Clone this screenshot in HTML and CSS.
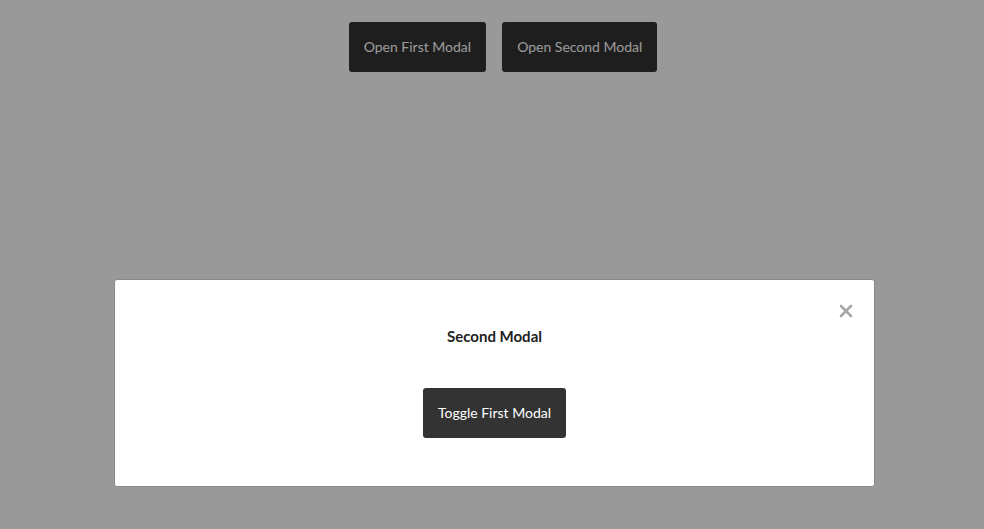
FILE: index.html
```html
<!DOCTYPE html>
<html lang="en">
<head>
    <meta charset="UTF-8">
    <title>Modals</title>
    <link rel="stylesheet" href="styles.css">
</head>
<body>
<div class="page">
    <div class="actions">
        <button class="btn">Open First Modal</button>
        <button class="btn">Open Second Modal</button>
    </div>
</div>
<div class="overlay">
    <div class="modal">
        <a class="close" href="javascript:;">
            <svg width="14" height="14" viewBox="0 0 14 14"><path d="M2 2L12 12M12 2L2 12" stroke="#a6a6a6" stroke-width="2.6" stroke-linecap="round"/></svg>
        </a>
        <h2 class="modal-title">Second Modal</h2>
        <button class="btn">Toggle First Modal</button>
    </div>
</div>
</body>
</html>
```

FILE: styles.css
```css
/* reset */
body,h1,h2,h3,p,ul,li{margin:0;padding:0}
body{font:14px/1.5 Lato, "Open Sans", sans-serif;color:#333;background:#fff;}
a{text-decoration:none}
button{font-family:inherit;cursor:pointer;outline:none;}

.page{
    height:529px;
}
.actions{
    display:flex;
    justify-content:center;
    gap:16px;
    padding:22px 0 0 22px;
}
.btn{
    height:50px;
    padding:0 15px 2px;
    border:0;
    border-radius:3px;
    background:#333;
    color:#fff;
    font-size:14px;
}

.overlay{
    position:fixed;
    left:0;
    top:0;
    right:0;
    bottom:0;
    background:rgba(0,0,0,0.4);
}
.modal{
    position:absolute;
    left:114px;
    top:279px;
    width:759px;
    height:206px;
    background:#fff;
    border:1px solid #8a8a8a;
    border-radius:3px;
    display:flex;
    flex-direction:column;
    align-items:center;
}
.modal-title{
    margin-top:45px;
    font-size:15px;
    font-weight:bold;
    line-height:22px;
    color:#222;
}
.modal .btn{
    margin-top:41px;
}
.close{
    position:absolute;
    right:21px;
    top:24px;
    width:14px;
    height:14px;
}
.close svg{
    display:block;
}
```
